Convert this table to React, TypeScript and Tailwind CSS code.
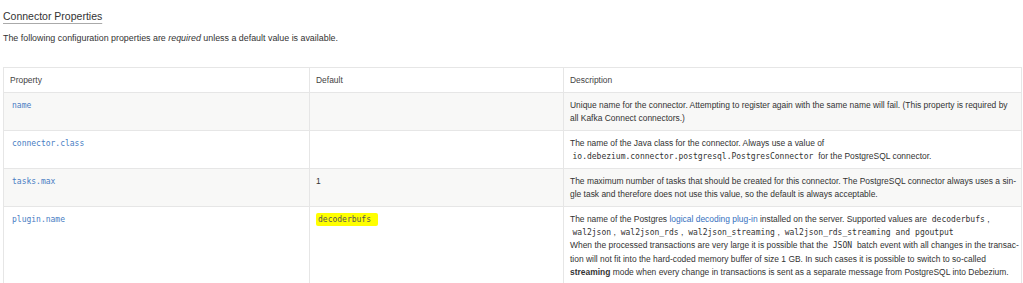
import React from 'react';

const mono = "font-['DejaVu_Sans_Mono','Liberation_Mono',monospace]";

function Code({ children }: { children: React.ReactNode }) {
  return <code className={`${mono} text-[8px] leading-none px-[2.5px] text-[#333]`}>{children}</code>;
}

function Prop({ children }: { children: React.ReactNode }) {
  return <code className={`${mono} text-[8px] leading-none px-[2px] text-[#4a7ec4]`}>{children}</code>;
}

const cell = 'border border-[#e6e6e6] px-[6px] pt-[6px] pb-[5px] align-top';

export default function App() {
  return (
    <div className="w-[1023px] h-[283px] bg-white overflow-hidden font-['Liberation_Sans',Arial,sans-serif] text-[#333]">
      <div className="pl-[3px] pt-[9px]">
        <h2 className="text-[10.5px] leading-[14px] underline underline-offset-[3px] decoration-[#aaa]">
          Connector Properties
        </h2>
        <p className="mt-[9px] text-[8.9px] leading-[13px]">
          The following configuration properties are <em>required</em> unless a default value is available.
        </p>
      </div>

      <table className="mt-[22px] ml-[3px] w-[1018px] table-fixed border-collapse text-[8.45px] leading-[13px]">
        <colgroup>
          <col className="w-[306px]" />
          <col className="w-[254px]" />
          <col className="w-[458px]" />
        </colgroup>
        <thead>
          <tr className="text-[#444]">
            <th className={`${cell} text-left font-normal`}>Property</th>
            <th className={`${cell} text-left font-normal`}>Default</th>
            <th className={`${cell} text-left font-normal`}>Description</th>
          </tr>
        </thead>
        <tbody>
          <tr className="bg-[#f8f8f7]">
            <td className={cell}><Prop>name</Prop></td>
            <td className={cell}></td>
            <td className={`${cell} whitespace-nowrap`}>
              Unique name for the connector. Attempting to register again with the same name will fail. (This property is required by
              <br />
              all Kafka Connect connectors.)
            </td>
          </tr>
          <tr>
            <td className={cell}><Prop>connector.class</Prop></td>
            <td className={cell}></td>
            <td className={`${cell} whitespace-nowrap`}>
              The name of the Java class for the connector. Always use a value of
              <br />
              <Code>io.debezium.connector.postgresql.PostgresConnector</Code> for the PostgreSQL connector.
            </td>
          </tr>
          <tr className="bg-[#f8f8f7]">
            <td className={cell}><Prop>tasks.max</Prop></td>
            <td className={cell}>1</td>
            <td className={`${cell} whitespace-nowrap`}>
              The maximum number of tasks that should be created for this connector. The PostgreSQL connector always uses a sin-
              <br />
              gle task and therefore does not use this value, so the default is always acceptable.
            </td>
          </tr>
          <tr>
            <td className={cell}><Prop>plugin.name</Prop></td>
            <td className={cell}>
              <span className={`${mono} text-[8px] leading-none text-[#555] bg-[#ffff00] pl-[2px] pr-[7px] py-[2px] rounded-[2px]`}>
                decoderbufs
              </span>
            </td>
            <td className={`${cell} whitespace-nowrap leading-[13.2px]`}>
              The name of the Postgres <a className="text-[#3571c0]">logical decoding plug-in</a> installed on the server. Supported values are <Code>decoderbufs</Code>,
              <br />
              <Code>wal2json</Code>, <Code>wal2json_rds</Code>, <Code>wal2json_streaming</Code>, <Code>wal2json_rds_streaming</Code>
              <Code>and</Code><Code>pgoutput</Code>
              <br />
              When the processed transactions are very large it is possible that the <Code>JSON</Code> batch event with all changes in the transac-
              <br />
              tion will not fit into the hard-coded memory buffer of size 1 GB. In such cases it is possible to switch to so-called
              <br />
              <strong className="font-bold">streaming</strong> mode when every change in transactions is sent as a separate message from PostgreSQL into Debezium.
            </td>
          </tr>
        </tbody>
      </table>
    </div>
  );
}
